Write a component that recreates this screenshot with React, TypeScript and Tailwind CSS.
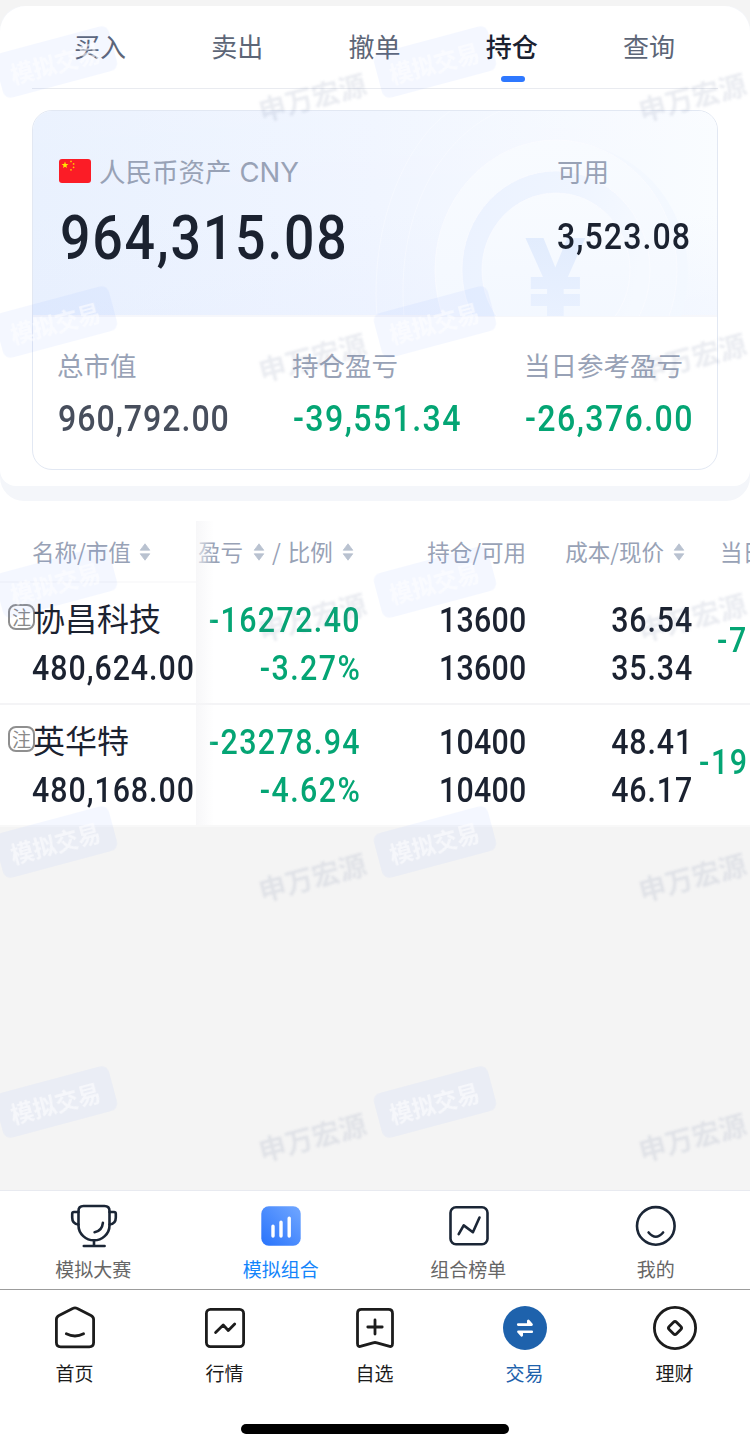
import type { ReactNode } from "react";
import clsx from "clsx";

const NUM =
  "inline-block scale-x-[0.88] font-['Roboto','Liberation_Sans',sans-serif] font-medium whitespace-nowrap";

const tabs = ["买入", "卖出", "撤单", "持仓", "查询"];

const summary = [
  { label: "总市值", value: "960,792.00", box: "w-[235px]", color: "text-[#474e5c] tracking-[1.1px]" },
  { label: "持仓盈亏", value: "-39,551.34", box: "w-[232px]", color: "text-[#04a574] tracking-[1.6px]" },
  { label: "当日参考盈亏", value: "-26,376.00", box: "w-[170px]", color: "text-[#04a574] tracking-[1.6px]" },
];

const holdings = [
  {
    name: "协昌科技",
    value: "480,624.00",
    profit: "-16272.40",
    ratio: "-3.27%",
    held: "13600",
    usable: "13600",
    cost: "36.54",
    price: "35.34",
    today: "-7",
    todayPad: "pl-[24px]",
  },
  {
    name: "英华特",
    value: "480,168.00",
    profit: "-23278.94",
    ratio: "-4.62%",
    held: "10400",
    usable: "10400",
    cost: "48.41",
    price: "46.17",
    today: "-19",
    todayPad: "pl-[6px]",
  },
];

const watermarkRows = [0, 1, 2, 3, 4];

const Sorter = () => (
  <svg width="12" height="18" viewBox="0 0 12 18" fill="#b9c2d0" className="shrink-0">
    <path d="M6 .8 10.8 7.2H1.2Z" stroke="#b9c2d0" strokeWidth=".8" strokeLinejoin="round" />
    <path d="M6 17.2 10.8 10.8H1.2Z" stroke="#b9c2d0" strokeWidth=".8" strokeLinejoin="round" />
  </svg>
);

const Flag = () => (
  <svg width="32" height="24" viewBox="0 0 32 24" className="-mt-[2px]">
    <rect width="32" height="24" rx="3" fill="#fb1c26" />
    <path
      d="M6 2.6 6.9 5 9.4 5.1 7.4 6.7 8.1 9.1 6 7.7 3.9 9.1 4.6 6.7 2.6 5.1 5.1 5Z"
      fill="#ffe600"
    />
    <g fill="#ffc400">
      <circle cx="12" cy="2.4" r=".9" />
      <circle cx="14.6" cy="4.9" r=".9" />
      <circle cx="14.6" cy="8.3" r=".9" />
      <circle cx="12" cy="10.8" r=".9" />
    </g>
  </svg>
);

// Faint coin behind the asset figures
const Coin = () => (
  <svg className="absolute top-0 right-0" width="360" height="205" viewBox="357 111 360 205">
    <defs>
      <linearGradient id="ring" x1="0" y1="0" x2="1" y2="0.2">
        <stop offset="0" stopColor="#ebf2ff" />
        <stop offset="0.6" stopColor="#eff5ff" />
        <stop offset="1" stopColor="#f5f9ff" />
      </linearGradient>
      <linearGradient id="yen" x1="0" y1="0" x2="0" y2="1">
        <stop offset="0" stopColor="#e0ebfd" />
        <stop offset="1" stopColor="#ebf2ff" />
      </linearGradient>
      <linearGradient id="edge" x1="0" y1="0" x2="1" y2="0">
        <stop offset="0.3" stopColor="#f1f6ff" stopOpacity="0" />
        <stop offset="1" stopColor="#f3f8ff" />
      </linearGradient>
      <linearGradient id="disc" x1="0" y1="0" x2="0" y2="1">
        <stop offset="0" stopColor="#f8fbff" />
        <stop offset="1" stopColor="#f2f7ff" />
      </linearGradient>
    </defs>
    <g fill="none" stroke="#fff" strokeOpacity=".35">
      <path d="M377 316C370 230 402 145 450 111" />
      <path d="M404 316C396 220 435 140 500 111" />
    </g>
    <ellipse cx="566" cy="273" rx="122" ry="130" fill="url(#edge)" />
    <ellipse cx="556" cy="270" rx="121" ry="130" fill="url(#disc)" stroke="#fbfcff" strokeOpacity=".6" />
    <ellipse cx="556" cy="270" rx="94" ry="99" fill="url(#ring)" stroke="#fbfcff" strokeOpacity=".6" />
    <ellipse cx="556" cy="270" rx="74" ry="77" fill="url(#disc)" stroke="#fbfcff" strokeOpacity=".6" />
    <text
      transform="translate(555.5 317) scale(0.88 1)"
      textAnchor="middle"
      fontFamily="Liberation Sans, sans-serif"
      fontWeight="700"
      fontSize="112"
      fill="url(#yen)"
      stroke="url(#yen)"
      strokeWidth="4"
    >
      ¥
    </text>
  </svg>
);

const line = {
  fill: "none",
  strokeLinecap: "round",
  strokeLinejoin: "round",
} as const;

const TrophyIcon = () => (
  <svg width="50" height="50" viewBox="0 0 50 50" {...line} stroke="#1b2636" strokeWidth="2.6">
    <path d="M14.5 6h21q5 0 5 5v14.5C40.5 34 33 40.300 25 40.300S9.500 34 9.500 25.500V11q0-5 5-5Z" />
    <path d="M9.5 12H5Q3.2 12 3.2 13.800V17.500Q3.200 24 9.500 24.500M40.500 12H45Q46.800 12 46.800 13.800V17.500Q46.800 24 40.500 24.500" />
    <path d="M33.9 22.800Q33 31 25.600 32.200M25 40.500v5.300M14.800 46h20.800" />
  </svg>
);

const BarsIcon = () => (
  <svg width="50" height="50" viewBox="0 0 50 50">
    <defs>
      <linearGradient id="bars" x1="1" y1="0" x2="0" y2="1">
        <stop offset="0.1" stopColor="#6aa2ff" />
        <stop offset="0.9" stopColor="#2f78fc" />
      </linearGradient>
    </defs>
    <rect x="5.3" y="6.3" width="39.4" height="39.4" rx="7.5" fill="url(#bars)" />
    <path
      d="M17 26.3v9.700M25 22.300V36M33.200 18.300V36"
      stroke="#fff"
      strokeWidth="3.4"
      strokeLinecap="round"
    />
  </svg>
);

const RankIcon = () => (
  <svg width="50" height="50" viewBox="0 0 50 50" {...line} stroke="#1b2636" strokeWidth="2.6">
    <rect x="6.5" y="7.3" width="37" height="37" rx="5.5" />
    <path d="M14.7 34.200 19.700 25.400 28.900 32.200 35.500 17.500" />
  </svg>
);

const SmileIcon = () => (
  <svg width="50" height="50" viewBox="0 0 50 50" {...line} stroke="#1b2636" strokeWidth="2.6">
    <circle cx="24.8" cy="25.9" r="18.8" />
    <path d="M17.6 32.500Q24.800 41 32.100 32.500" />
  </svg>
);

const HomeIcon = () => (
  <svg width="46" height="46" viewBox="0 0 46 46" {...line} stroke="#1c1c1c" strokeWidth="2.8">
    <path d="M21.2 3.300q1.800-1 3.600 0L39 10.500q2.600 1.300 2.600 4V37.500q0 4.300-4.300 4.300H8.700q-4.300 0-4.300-4.300V14.500q0-2.700 2.600-4Z" />
    <path d="M14.3 28.800Q23 33.200 31.600 28.800" />
  </svg>
);

const MarketIcon = () => (
  <svg width="46" height="46" viewBox="0 0 46 46" {...line} stroke="#1c1c1c" strokeWidth="2.8">
    <rect x="4.4" y="4.4" width="37.2" height="37.2" rx="4" />
    <path d="M13.6 27.500 21.200 20 26.300 25.500 32.700 19" />
  </svg>
);

const BookmarkIcon = () => (
  <svg width="46" height="46" viewBox="0 0 46 46" {...line} stroke="#1c1c1c" strokeWidth="2.8">
    <path d="M9.5 4.400h27q4 0 4 4V38.500q0 3.900-3.700 2.700L25 37.800q-2-.6-4 0L9.200 41.200Q5.500 42.400 5.500 38.500V8.400q0-4 4-4Z" />
    <path d="M15.8 22h14.400M23 15v14" />
  </svg>
);

const TradeIcon = () => (
  <svg width="46" height="46" viewBox="0 0 46 46">
    <circle cx="23" cy="23" r="22" fill="#1e62ac" />
    <path
      d="M16.2 19.600h13.400L26.300 16V19.600M29.800 26.700H16.400L19.700 30.300V26.700"
      fill="#fff"
      stroke="#fff"
      strokeWidth="2.6"
      strokeLinecap="round"
      strokeLinejoin="round"
    />
  </svg>
);

const WealthIcon = () => (
  <svg width="46" height="46" viewBox="0 0 46 46" {...line} stroke="#1c1c1c" strokeWidth="2.8">
    <circle cx="23" cy="23" r="20.6" />
    <rect x="17.8" y="17.8" width="10.4" height="10.4" rx="2.2" transform="rotate(45 23 23)" />
  </svg>
);

const subNav: { label: string; icon: ReactNode; active?: boolean }[] = [
  { label: "模拟大赛", icon: <TrophyIcon /> },
  { label: "模拟组合", icon: <BarsIcon />, active: true },
  { label: "组合榜单", icon: <RankIcon /> },
  { label: "我的", icon: <SmileIcon /> },
];

const mainNav: { label: string; icon: ReactNode; active?: boolean }[] = [
  { label: "首页", icon: <HomeIcon /> },
  { label: "行情", icon: <MarketIcon /> },
  { label: "自选", icon: <BookmarkIcon /> },
  { label: "交易", icon: <TradeIcon />, active: true },
  { label: "理财", icon: <WealthIcon /> },
];

const Watermark = () => (
  <div className="pointer-events-none absolute inset-x-0 top-0 h-[1190px] overflow-hidden">
    {watermarkRows.map((row) => (
      <div key={row} className="absolute inset-x-0" style={{ top: row * 260 }}>
        <Badge className="left-[-3px]" />
        <Badge className="left-[376px]" />
        <Brand className="left-[252px]" />
        <Brand className="left-[632px]" />
      </div>
    ))}
  </div>
);

const Badge = ({ className }: { className: string }) => (
  <div
    className={clsx(
      "absolute top-[39px] flex h-[46px] w-[118px] -rotate-[15deg] items-center justify-center rounded-[8px] bg-[#3c7cff]/[0.06] pr-[2px] text-[23px] leading-none font-bold text-white/60 blur-[0.6px]",
      className
    )}
  >
    模拟交易
  </div>
);

const Brand = ({ className }: { className: string }) => (
  <div
    className={clsx(
      "absolute top-[79px] h-[34px] w-[120px] -rotate-[15deg] text-center text-[27.5px] leading-[34px] font-bold whitespace-nowrap text-[#5a6c90]/[0.13] blur-[0.8px]",
      className
    )}
  >
    申万宏源
  </div>
);

type PairProps = { top: string; bottom: string; className?: string; tracking: string };

const Pair = ({ top, bottom, className, tracking }: PairProps) => (
  <div
    className={clsx(
      "flex h-full w-[166px] shrink-0 flex-col items-end pt-[13px] text-[34.5px] leading-[48px]",
      className
    )}
  >
    <span className={clsx(NUM, "origin-right", tracking)}>{top}</span>
    <span className={clsx(NUM, "origin-right", tracking)}>{bottom}</span>
  </div>
);

const App = () => {
  return (
    <div className="relative flex h-[1450px] w-[750px] flex-col overflow-hidden bg-[#f4f4f4] pt-1.5 font-['Noto_Sans_CJK_SC',sans-serif] text-[#1b2230]">
      {/* Account panel */}
      <section className="h-[495px] shrink-0 rounded-t-[26px] bg-white">
        <div className="h-full rounded-[24px] bg-[#f4f6fa]">
          <div className="h-[480px] rounded-t-[26px] rounded-b-[16px] bg-white px-8">
            <div className="flex h-[83px] border-b border-[#e9ebf0]">
              {tabs.map((tab) => (
                <div
                  key={tab}
                  className={clsx(
                    "flex flex-1 flex-col items-center pt-[20px] text-[26px] leading-[40px]",
                    tab === "持仓" ? "font-medium text-[#1b2230]" : "text-[#5d6677]"
                  )}
                >
                  <span className="mr-[1px]">{tab}</span>
                  {tab === "持仓" && (
                    <span className="mt-[10px] ml-[1px] h-1.5 w-6 rounded-full bg-[#2e78ff]" />
                  )}
                </div>
              ))}
            </div>

            {/* Asset card */}
            <div className="mt-[21px] h-[360px] overflow-hidden rounded-[20px] border border-[#e2e8f3]">
              <div className="relative h-[206px] border-b-2 border-[#f6f7fb] bg-linear-to-r from-[#e9f1fe] via-[#f0f5ff] to-[#f9fcff]">
                <div className="absolute inset-0 bg-linear-to-b from-white/10 via-transparent to-[#e6edff]/30" />
                <Coin />
                <div className="relative flex pl-[26px]">
                  <div className="w-[498px]">
                    <div className="flex items-center gap-2 pt-[40px] text-[26.5px] leading-[40px] text-[#98a2b6]">
                      <Flag />
                      <span>
                        人民币资产{" "}
                        <span className="ml-[2px] font-['Inter','Liberation_Sans',sans-serif] text-[27.5px]">
                          CNY
                        </span>
                      </span>
                    </div>
                    <div
                      className={clsx(
                        NUM,
                        "mt-[11px] ml-[1px] origin-left text-[61px] leading-[70px] tracking-[2px]"
                      )}
                    >
                      964,315.08
                    </div>
                  </div>
                  <div>
                    <div className="pt-[40px] text-[26px] leading-[40px] text-[#98a2b6]">可用</div>
                    <div
                      className={clsx(
                        NUM,
                        "mt-[21px] origin-left text-[36.5px] leading-[50px] tracking-[1.2px]"
                      )}
                    >
                      3,523.08
                    </div>
                  </div>
                </div>
              </div>
              <div className="flex pt-[28px] pl-[25px]">
                {summary.map((item) => (
                  <div key={item.label} className={clsx("shrink-0", item.box)}>
                    <div className="-ml-[1px] text-[26.5px] leading-[40px] whitespace-nowrap text-[#98a2b6]">
                      {item.label}
                    </div>
                    <div
                      className={clsx(
                        NUM,
                        "mt-[10px] origin-left text-[36.5px] leading-[48px]",
                        item.color
                      )}
                    >
                      {item.value}
                    </div>
                  </div>
                ))}
              </div>
            </div>
          </div>
        </div>
      </section>

      {/* Holdings */}
      <section className="flex h-[326px] shrink-0 overflow-hidden border-b-2 border-[#f8f8f8] bg-white">
        <div className="w-[196px] shrink-0">
          <div className="flex h-[82px] items-center gap-[8px] border-b-2 border-[#fafafb] pt-[21px] pl-8 text-[22.5px] text-[#98a2b6]">
            名称/市值
            <Sorter />
          </div>
          {holdings.map((item) => (
            <div key={item.name} className="h-[122px] border-b-2 border-[#f4f4f6] pt-[10px]">
              <div className="flex h-[48px] items-center pl-2">
                <span className="flex h-[26px] w-[27px] shrink-0 items-center justify-center rounded-[8px] border-2 border-[#8f8f8f] pb-[2px] text-[19px] leading-none text-[#8a8a8a]">
                  注
                </span>
                <span className="-ml-[2px] text-[32px] leading-[48px] whitespace-nowrap">{item.name}</span>
              </div>
              <div
                className={clsx(
                  NUM,
                  "ml-8 origin-left text-[34.5px] leading-[54px] tracking-[1.1px]"
                )}
              >
                {item.value}
              </div>
            </div>
          ))}
        </div>

        <div className="relative min-w-0 flex-1">
          <div className="flex h-[82px] items-center pt-[20px] text-[22.5px] whitespace-nowrap text-[#98a2b6]">
            <div className="flex w-[164px] shrink-0 items-center pl-[2px]">
              盈亏
              <span className="ml-[10px]">
                <Sorter />
              </span>
              <span className="mx-[7px]">/</span>
              比例
              <span className="ml-[9px]">
                <Sorter />
              </span>
            </div>
            <div className="w-[166px] shrink-0 text-right">持仓/可用</div>
            <div className="flex w-[159px] shrink-0 items-center justify-end gap-[9px]">
              成本/现价
              <Sorter />
            </div>
            <div className="w-[30px] grow overflow-hidden pl-[35px]">当日</div>
          </div>
          {holdings.map((item) => (
            <div key={item.name} className="flex h-[122px] overflow-hidden border-b-2 border-[#f4f4f6]">
              <Pair
                top={item.profit}
                bottom={item.ratio}
                className="-ml-[1px] text-[#04a574]"
                tracking="tracking-[1.6px]"
              />
              <Pair top={item.held} bottom={item.usable} tracking="tracking-[0.3px]" />
              <Pair top={item.cost} bottom={item.price} tracking="tracking-[1px]" />
              <div
                className={clsx(
                  "shrink-0 pt-[30px] text-[34.5px] leading-[48px] text-[#04a574]",
                  item.todayPad
                )}
              >
                <span className={clsx(NUM, "origin-left tracking-[1.8px]")}>{item.today}</span>
              </div>
            </div>
          ))}
          {/* Edge shadow of the fixed column */}
          <div className="absolute top-[20px] bottom-0 left-0 w-[18px] bg-linear-to-r from-[#f5f5f7]/80 to-white/0" />
        </div>
      </section>

      <div className="flex-1" />

      <nav className="flex h-[99px] shrink-0 border-t border-[#e8eaf0] bg-white">
        {subNav.map((item) => (
          <div key={item.label} className="flex flex-1 flex-col items-center pt-[9px]">
            {item.icon}
            <span
              className={clsx(
                "mt-[5px] mr-[1px] text-[19px] leading-[28px]",
                item.active ? "text-[#1485fb]" : "text-[#666]"
              )}
            >
              {item.label}
            </span>
          </div>
        ))}
      </nav>

      <nav className="h-[161px] shrink-0 border-t border-[#9c9c9c] bg-white">
        <div className="flex h-[134px] pt-[15px]">
          {mainNav.map((item) => (
            <div key={item.label} className="flex flex-1 flex-col items-center">
              {item.icon}
              <span
                className={clsx(
                  "mt-[8px] mr-[1px] text-[19px] leading-[28px]",
                  item.active ? "text-[#1e62ac]" : "text-[#1c1c1c]"
                )}
              >
                {item.label}
              </span>
            </div>
          ))}
        </div>
        <div className="mx-auto h-[10px] w-[268px] rounded-full bg-black" />
      </nav>

      <Watermark />
    </div>
  );
};

export default App;
